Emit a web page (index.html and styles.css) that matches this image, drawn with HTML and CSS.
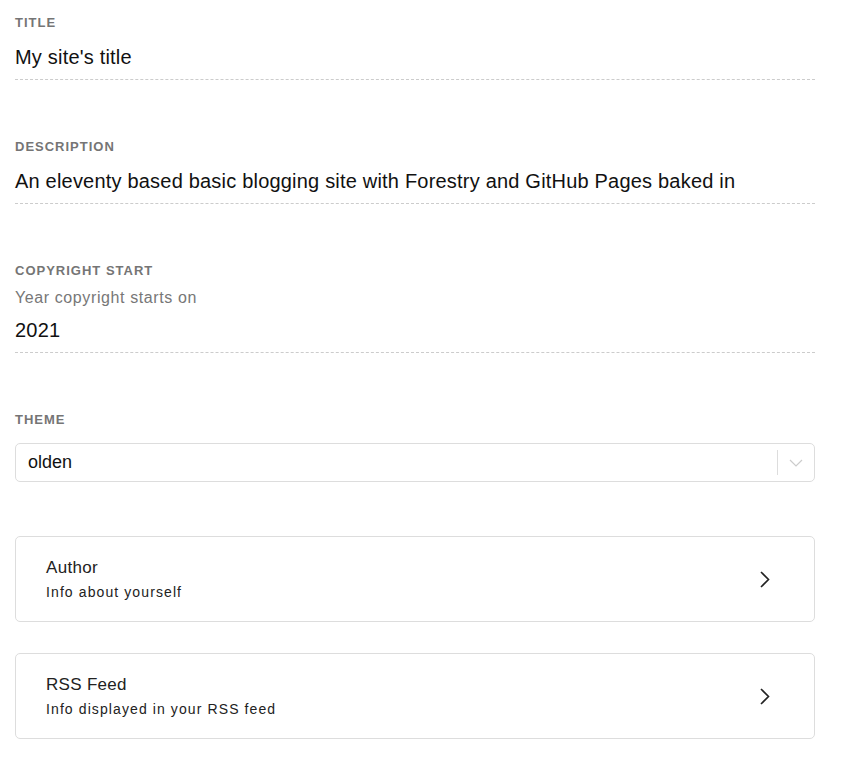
FILE: index.html
```html
<!DOCTYPE html>
<html>
<head>
<meta charset="utf-8">
<link rel="stylesheet" href="styles.css">
</head>
<body>
<div class="form">
  <div class="field">
    <div class="label">Title</div>
    <div class="value">My site's title</div>
  </div>
  <div class="field">
    <div class="label">Description</div>
    <div class="value">An eleventy based basic blogging site with Forestry and GitHub Pages baked in</div>
  </div>
  <div class="field">
    <div class="label">Copyright Start</div>
    <div class="help">Year copyright starts on</div>
    <div class="value">2021</div>
  </div>
  <div class="field field-select">
    <div class="label">Theme</div>
    <div class="select">
      <span class="select-value">olden</span>
      <span class="select-sep"></span>
      <svg class="select-arrow" width="14" height="8" viewBox="0 0 14 8"><path d="M1 1l6 6 6-6" fill="none" stroke="#ccc" stroke-width="1.2"/></svg>
    </div>
  </div>
  <div class="group">
    <div class="group-text">
      <div class="group-title">Author</div>
      <div class="group-desc">Info about yourself</div>
    </div>
    <svg class="chev" width="12" height="17" viewBox="0 0 12 17"><path d="M2 1l7.5 7.5-7.5 7.5" fill="none" stroke="#222" stroke-width="1.6"/></svg>
  </div>
  <div class="group">
    <div class="group-text">
      <div class="group-title">RSS Feed</div>
      <div class="group-desc">Info displayed in your RSS feed</div>
    </div>
    <svg class="chev" width="12" height="17" viewBox="0 0 12 17"><path d="M2 1l7.5 7.5-7.5 7.5" fill="none" stroke="#222" stroke-width="1.6"/></svg>
  </div>
</div>
</body>
</html>
```
FILE: styles.css
```css
html, body {
  margin: 0;
  padding: 0;
  background: #fff;
  font-family: "Liberation Sans", Arial, sans-serif;
  color: #111;
}
.form {
  width: 800px;
  padding: 15px 0 0 15px;
  display: flex;
  flex-direction: column;
}
.field {
  display: flex;
  flex-direction: column;
  margin-bottom: 59px;
}
.label {
  font-size: 13px;
  line-height: 16px;
  font-weight: bold;
  text-transform: uppercase;
  letter-spacing: 1px;
  color: #757575;
  margin-bottom: 14px;
}
.help {
  font-size: 16px;
  line-height: 20px;
  letter-spacing: 0.6px;
  color: #777;
  margin-top: -5px;
  margin-bottom: 10px;
}
.value {
  font-size: 20px;
  line-height: 24px;
  letter-spacing: 0.2px;
  padding-bottom: 10px;
  border-bottom: 1px dashed #ccc;
  color: #111;
}
.field-select {
  margin-bottom: 54px;
}
.field-select .label {
  margin-bottom: 15px;
}
.select {
  box-sizing: border-box;
  height: 39px;
  border: 1px solid #ddd;
  border-radius: 5px;
  display: flex;
  align-items: center;
  padding-left: 12px;
}
.select-value {
  flex: 1;
  font-size: 18px;
  color: #111;
}
.select-sep {
  width: 1px;
  height: 25px;
  background: #ddd;
}
.select-arrow {
  margin: 0 11px 0 11px;
}
.group {
  box-sizing: border-box;
  height: 86px;
  border: 1px solid #ddd;
  border-radius: 5px;
  display: flex;
  align-items: center;
  padding: 0 43px 0 30px;
  margin-bottom: 31px;
}
.group-text {
  flex: 1;
}
.group-title {
  font-size: 17px;
  line-height: 20px;
  color: #222;
  letter-spacing: 0.3px;
  margin-bottom: 5px;
}
.group-desc {
  font-size: 14px;
  line-height: 18px;
  color: #222;
  letter-spacing: 1.1px;
}
```
